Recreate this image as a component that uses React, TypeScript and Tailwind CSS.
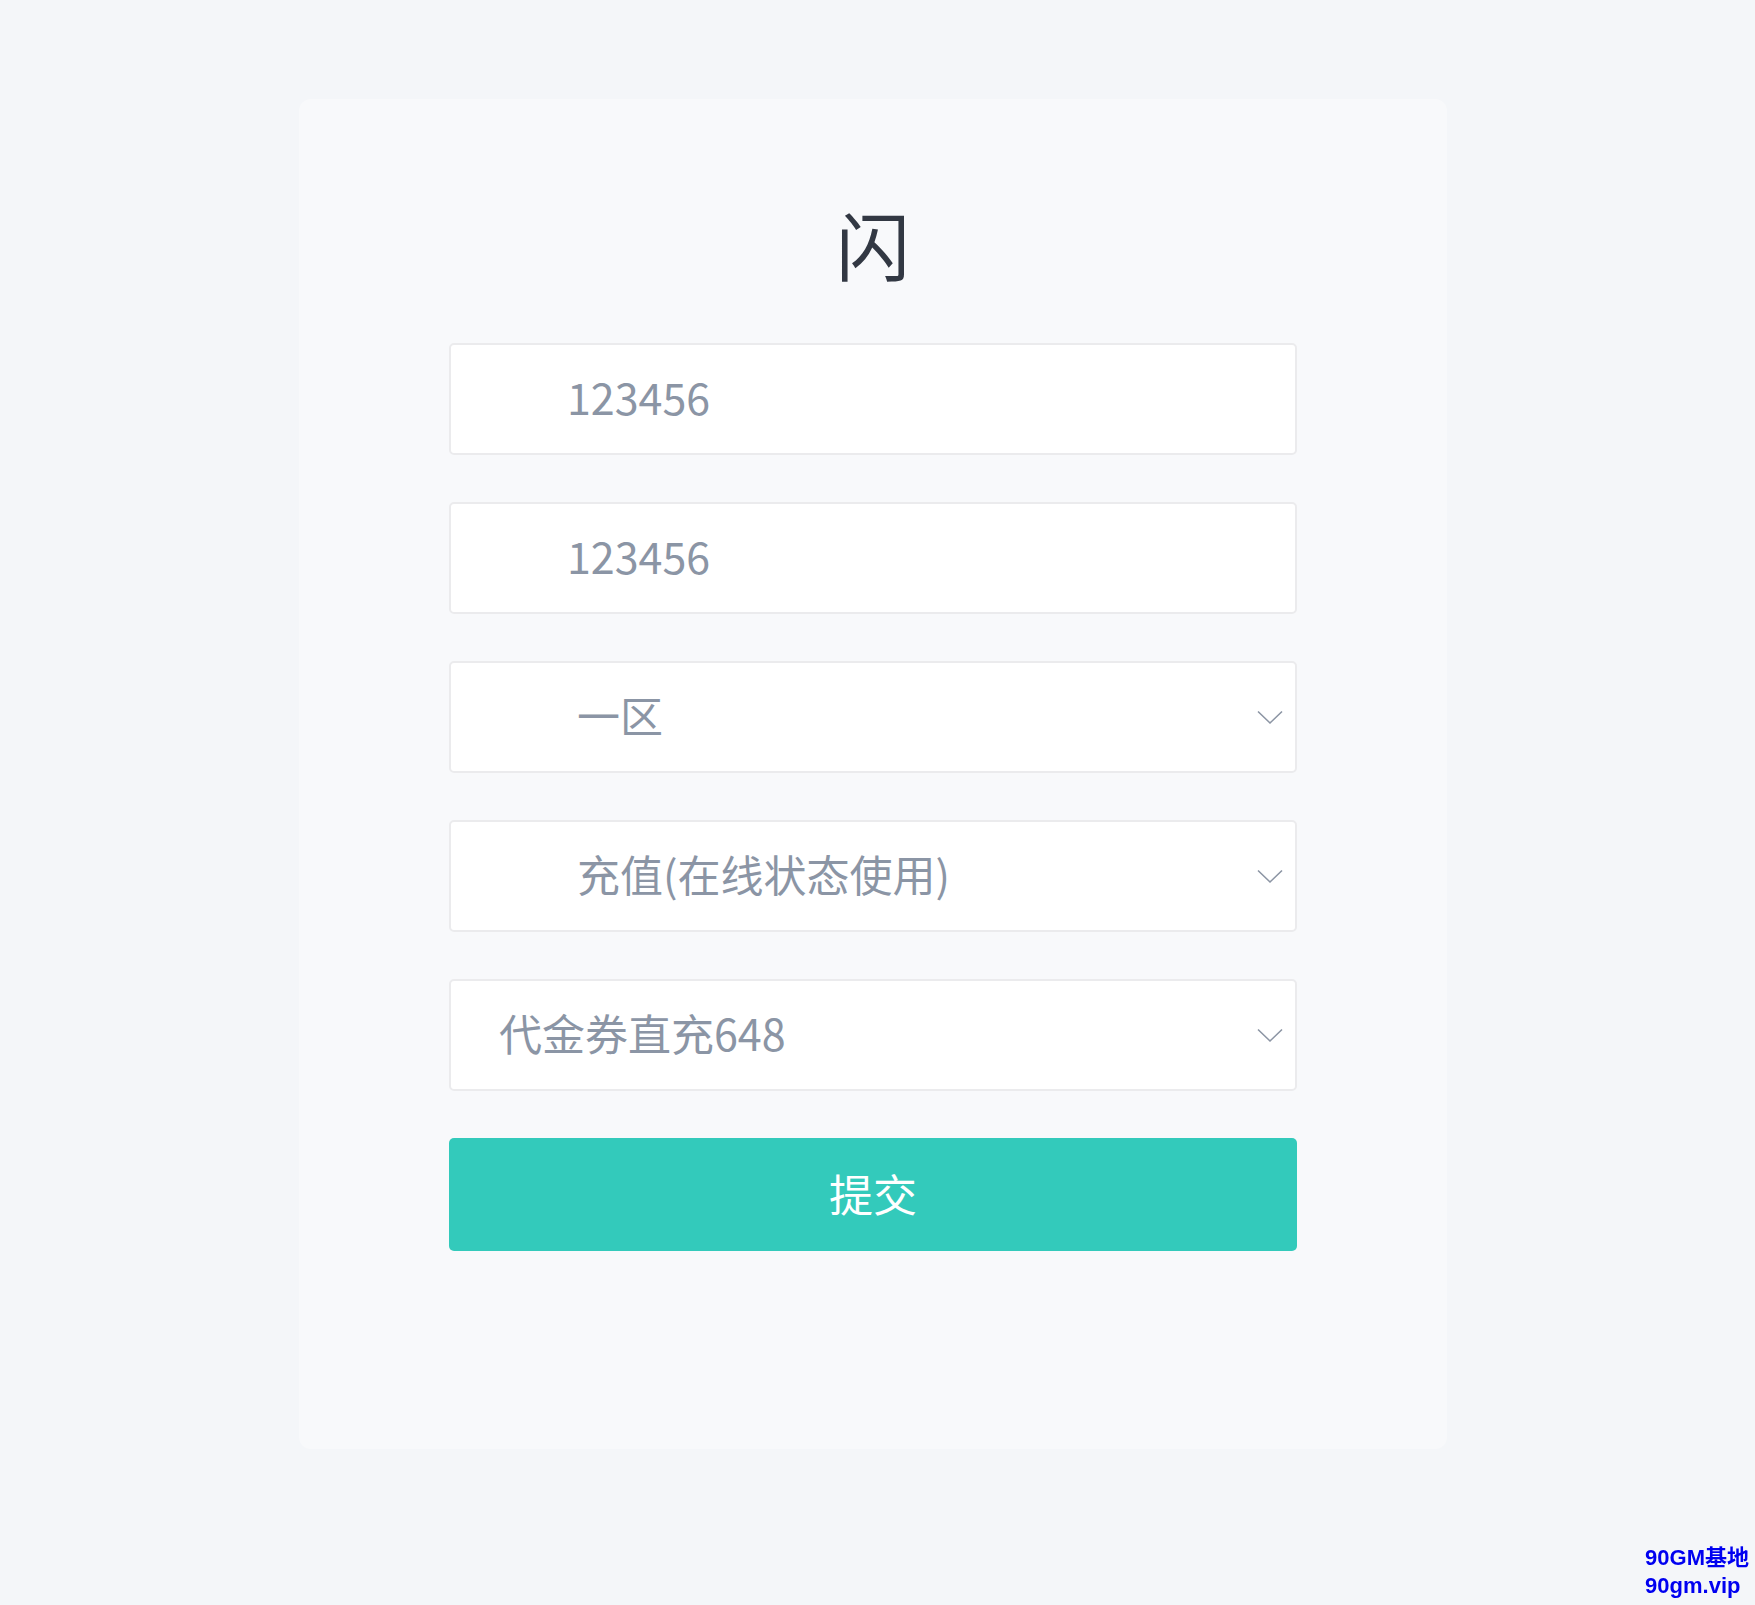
import { useState } from "react";

const font = { fontFamily: '"Noto Sans CJK SC", "Noto Sans", sans-serif' };

function Chevron() {
  return (
    <svg width="26" height="15" viewBox="0 0 26 15" fill="none" className="shrink-0">
      <polyline points="1,1.5 13,13 25,1.5" stroke="#8c95a4" strokeWidth="1.6" />
    </svg>
  );
}

function Field({ value, pad, select }: { value: string; pad: string; select?: boolean }) {
  return (
    <div
      className={`flex h-[112px] items-center rounded-[5px] border-2 border-[#ebebed] bg-white pr-[12px] ${pad}`}
    >
      <span className="flex-1 pb-[6px] text-[43px] leading-none text-[#8b95a5]">{value}</span>
      {select && <Chevron />}
    </div>
  );
}

export default function App() {
  const [sent, setSent] = useState(false);

  return (
    <div className="relative min-h-screen bg-[#f4f6f9]" style={font}>
      <div className="pl-[299px] pt-[99px] pb-[157px]">
        <div className="flex w-[1148px] flex-col rounded-[12px] bg-[#f8f9fb] px-[150px] pt-[96px] pb-[198px]">
          <div className="mb-[48px] flex h-[100px] items-center justify-center">
            <h1 className="pb-[4px] text-[74px] font-normal leading-none text-[#323843]">闪</h1>
          </div>

          <div className="flex flex-col gap-[47px]">
            <Field value="123456" pad="pl-[116px]" />
            <Field value="123456" pad="pl-[116px]" />
            <Field value="一区" pad="pl-[126px]" select />
            <Field value="充值(在线状态使用)" pad="pl-[126px]" select />
            <Field value="代金券直充648" pad="pl-[48px]" select />

            <button
              onClick={() => setSent(!sent)}
              className="flex h-[113px] items-center justify-center rounded-[5px] bg-[#33cabb] pb-[4px] text-[44px] leading-none text-white"
            >
              提交
            </button>
          </div>
        </div>
      </div>

      <div
        className="fixed right-[6px] bottom-[5px] text-[22px] font-bold leading-[28px] text-[#0000f0]"
        style={{ fontFamily: '"Liberation Sans", "Noto Sans CJK SC", sans-serif' }}
      >
        <div>90GM基地</div>
        <div>90gm.vip</div>
      </div>
    </div>
  );
}
